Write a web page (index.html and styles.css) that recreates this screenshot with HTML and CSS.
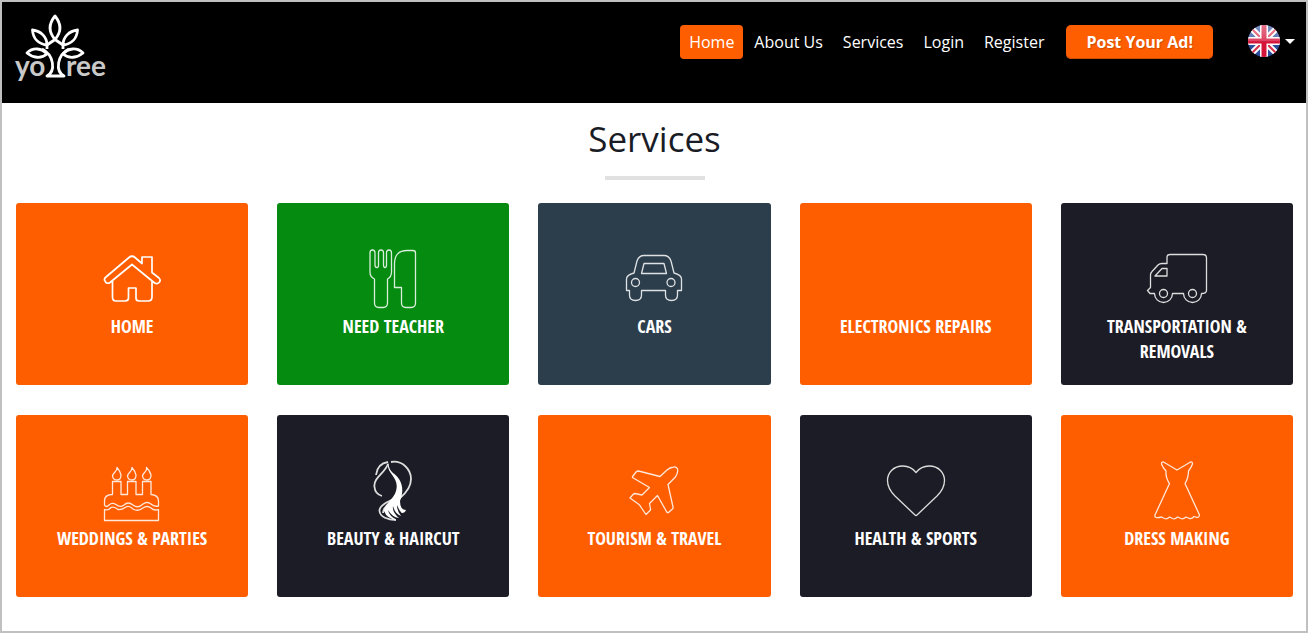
FILE: index.html
```html
<!DOCTYPE html>
<html lang="en">
<head>
<meta charset="utf-8">
<meta name="viewport" content="width=device-width, initial-scale=1">
<title>Yotree - Services</title>
<link rel="stylesheet" href="styles.css">
</head>
<body>
<header class="site-header">
  <a class="logo" href="#" aria-label="Yotree">
    <svg class="logo-art" viewBox="0 0 90 70" aria-hidden="true">
      <g class="logo-word">
        <text x="0" y="62">yo</text>
        <text x="51" y="62">ree</text>
      </g>
      <g class="logo-tree">
        <path d="M40 2C33.500 10 33.500 18 40 25.500C46.500 18 46.500 10 40 2Z"/>
        <path d="M17.500 16C18 24 23 30 32 31C32 23 26 17 17.500 16Z"/>
        <path d="M62.500 16C62 24 57 30 48 31C48 23 54 17 62.500 16Z"/>
        <path d="M12 39C18 33 27 34 32 40C26 45 18 44 12 39Z"/>
        <path d="M68 39C62 33 53 34 48 40C54 45 62 44 68 39Z"/>
        <path d="M32 35V31L40 25.500L48 31V35"/>
        <path d="M27 35C39 41 41 57 32 62H49C40 57 42 41 54 35"/>
      </g>
    </svg>
  </a>
  <nav class="main-nav" aria-label="Main">
    <a class="nav-link active" href="#">Home</a>
    <a class="nav-link" href="#">About Us</a>
    <a class="nav-link" href="#">Services</a>
    <a class="nav-link" href="#">Login</a>
    <a class="nav-link" href="#">Register</a>
  </nav>
  <button class="post-ad" type="button">Post Your Ad!</button>
  <button class="language" type="button" aria-label="Language: English">
    <svg class="flag" viewBox="0 0 32 32" aria-hidden="true">
      <defs>
        <clipPath id="disc"><circle cx="16" cy="16" r="16"/></clipPath>
        <linearGradient id="gloss" x1="0" y1="0" x2="0" y2="1">
          <stop offset="0" stop-color="#fff" stop-opacity=".4"/>
          <stop offset=".5" stop-color="#fff" stop-opacity=".2"/>
          <stop offset=".52" stop-color="#fff" stop-opacity="0"/>
        </linearGradient>
      </defs>
      <g clip-path="url(#disc)">
        <rect width="32" height="32" fill="#2a4d9b"/>
        <path d="M0 0L32 32M32 0L0 32" stroke="#fff" stroke-width="6"/>
        <path d="M0 0L32 32M32 0L0 32" stroke="#d8304a" stroke-width="2"/>
        <path d="M16 0V32M0 16H32" stroke="#fff" stroke-width="8"/>
        <path d="M16 0V32M0 16H32" stroke="#d5143a" stroke-width="5"/>
        <rect width="32" height="32" fill="url(#gloss)"/>
      </g>
    </svg>
    <svg class="caret" viewBox="0 0 10 5" aria-hidden="true"><path d="M0 0H10L5 5Z"/></svg>
  </button>
</header>

<main class="services">
  <h1 class="title">Services</h1>
  <div class="grid">
    <a class="card orange" href="#">
      <svg class="icon bold" viewBox="0 0 64 64" aria-hidden="true"><path d="M12.500 34V50Q12.500 54 16 54H25Q28.500 54 28.500 51V41H36V51Q36 54 39 54H48Q52 54 52 50V34M32 17.500L10 35.500Q8 37 6 35.500L5 34Q3.500 32 6 30L29 10.500Q32 8 35 10.500L42 16.500V10H52V25.500L59 31Q61 33 59.500 35Q57 38 54 35.500Z"/></svg>
      <span class="label">Home</span>
    </a>
    <a class="card green" href="#">
      <svg class="icon" viewBox="0 0 64 64" aria-hidden="true"><path d="M9 6Q9 3 11.500 3T14 6V18Q14 20.500 15.800 20.500T17.500 18V6Q17.500 3 20 3T22.500 6V18Q22.500 20.500 24 20.500T25.500 18V6Q25.500 3 28 3T30.500 6V25Q30.500 30 26.500 32V56Q26.500 60.500 22 60.500H18Q13.500 60.500 13.500 56V32Q9 30 9 25ZM33.500 40.500V17Q33.500 3.500 46 3.500H52Q54.500 3.500 54.500 6V56Q54.500 60.500 50 60.500H45Q40.500 60.500 40.500 56V40.500Z"/></svg>
      <span class="label">Need Teacher</span>
    </a>
    <a class="card slate" href="#">
      <svg class="icon" viewBox="0 0 64 64" aria-hidden="true"><path d="M12 26L15 14Q17 8.500 22 8.500H42Q47 8.500 49 14L52 26Q59.500 28 59.500 32V43.500H55.500V48Q55.500 53.500 49.500 53.500T43.500 48V43.500H19.500V48Q19.500 53.500 13.500 53.500T7.500 48V43.500H4.500V32Q4.500 28 12 26ZM22 16.500H42L44.500 26.500H19.500Z"/><circle cx="13.500" cy="35.500" r="4"/><circle cx="49" cy="35.500" r="4"/></svg>
      <span class="label">Cars</span>
    </a>
    <a class="card orange" href="#">
      <span class="icon"></span>
      <span class="label">Electronics Repairs</span>
    </a>
    <a class="card dark" href="#">
      <svg class="icon" viewBox="0 0 64 64" aria-hidden="true"><path d="M22 16V10Q22 7.500 25 7.500H58Q61.500 7.500 61.500 11V43.500Q61.500 46.500 56.500 46.500A9 9 0 0 1 38.500 46.500H27.500A9 9 0 0 1 9.500 46.500H5L2.500 43.500L5.500 40.500V28Q5.500 26 7 24.500L13 18Q14.500 16.500 17 16.500H22ZM10 29H22V21.500H17Z"/><circle cx="18.500" cy="46.500" r="4"/><circle cx="47.500" cy="46.500" r="4"/></svg>
      <span class="label">Transportation &amp; Removals</span>
    </a>
    <a class="card orange" href="#">
      <svg class="icon" viewBox="0 0 64 64" aria-hidden="true"><path d="M4.500 46V42Q4.500 35.500 12.500 35.500V22.500H21V35.500H27.500V22.500H36V35.500H42.500V22.500H51V35.500Q58.500 36 58.500 42V47Q54 48 51 45Q47 42 43 45Q38 50 33 46Q28 42 24 46Q20 49 16 45.500Q12 43 9 46T4.500 46ZM4.500 61.500V50.500Q8 52 11 48.500Q14 47 18 50.500Q22 51 26 48Q29 46 33 50Q38 53 43 49Q47 46 51 49Q54 52 58.500 50.500V61.500Z"/><path d="M17 8.500Q20 12 21 16Q21 21 17 21T12.500 17Q13 15 15 13Q17 11 17 8.500ZM32 8.500Q35 12 36 16Q36 21 32 21T27.500 17Q28 15 30 13Q32 11 32 8.500ZM46.500 8.500Q50 12 51 16Q51 21 47 21T42.500 17Q43 15 45 13Q47 11 46.500 8.500Z"/></svg>
      <span class="label">Weddings &amp; Parties</span>
    </a>
    <a class="card dark" href="#">
      <svg class="icon" viewBox="0 0 64 64" aria-hidden="true"><path class="thick" d="M27 5C24 14 12 19 13.500 28C14 33 17 36 21 37M15 16C16 8 20 4 27 3M30 3C41 1 50 10 50 20C50 28 45 34 39 39M37 38C28 42 18 46 18.500 52C19 58 27 61 35 61M35 41C28 45 22 48 22 54"/><path class="solid" d="M27 3C25 16 39 17 35 32C33 40 23 45 23 52Q26 60 36 61Q28 57 27 51Q31 58 38 59Q31 53 32 47Q34 55 40 57Q36 52 36 46Q39 53 41 54Q44 54 45 51Q39 51 39 42C45 27 38 18 32 14Q28 11 27 3Z"/></svg>
      <span class="label">Beauty &amp; Haircut</span>
    </a>
    <a class="card orange" href="#">
      <svg class="icon" viewBox="0 0 64 64" aria-hidden="true"><path d="M38 17.500L16.500 12L14.500 12.500L10.500 17.500V18.500L27.500 28.500L20 36L13 34.500Q12 34.500 11 35.500L8 39L17 45.500Q18.500 47 19.500 49L24 55.500L28.500 51V50L27.500 44.500L35.500 36.500L45 53.500H46.500L51 49.500V48L46 25.500L53 18.500Q56.500 14 55.500 10Q54.500 7.500 51.500 8Q48 8.500 45 11Z"/></svg>
      <span class="label">Tourism &amp; Travel</span>
    </a>
    <a class="card dark" href="#">
      <svg class="icon" viewBox="0 0 64 64" aria-hidden="true"><path d="M32 13.500C28 8.500 24 7 19 7C9 7 3.500 14 3.500 21.500C3.500 29 8 34 11 37L31 56Q32 57 33 56L53 37C56 34 60.500 29 60.500 21.500C60.500 14 55 7 45 7C40 7 36 8.500 32 13.500Z"/></svg>
      <span class="label">Health &amp; Sports</span>
    </a>
    <a class="card orange" href="#">
      <svg class="icon" viewBox="0 0 64 64" aria-hidden="true"><path d="M18.500 3L32 11L45.500 3Q47.500 2.500 47.500 5Q46 9 43.500 12Q43.500 19 40 24.500L54.500 56Q54 59.500 50.500 58L49 57.500Q47 60 44.500 59.500L41 58Q38 60.500 36 59.500L32.500 58Q30 60.500 27.500 59.500L24.500 58Q22 60.500 19.500 59.500L16.500 58Q9 60 10 56L24.500 24.500Q20.500 19 21 12Q18 9 16.500 5Q16.500 2.500 18.500 3Z"/></svg>
      <span class="label">Dress Making</span>
    </a>
  </div>
</main>
</body>
</html>
```

FILE: styles.css
```css
* {
  box-sizing: border-box;
}

body {
  margin: 0;
  min-height: 100vh;
  border: 2px solid #c0c0c0;
  background: #fff;
  color: #1a1c25;
  font-family: "Open Sans", sans-serif;
  font-size: 16px;
}

a {
  color: inherit;
  text-decoration: none;
}

button {
  border: 0;
  font: inherit;
  color: inherit;
  cursor: pointer;
}

.site-header {
  display: flex;
  align-items: flex-start;
  padding: 12px 11px 19px 13px;
  background: #000;
  color: #fff;
}

.logo {
  display: block;
  margin-right: auto;
}

.logo-art {
  display: block;
  width: 90px;
  height: 70px;
  overflow: visible;
}

.logo-word {
  fill: #c9c9c9;
  font-family: Lato, sans-serif;
  font-size: 28px;
  font-weight: 700;
}

.logo-tree {
  fill: none;
  stroke: #fff;
  stroke-width: 2.8;
  stroke-linejoin: round;
}

.main-nav {
  display: flex;
  gap: 2px;
  margin-top: 11px;
}

.nav-link {
  padding: 0 9px;
  border-radius: 4px;
  line-height: 34px;
}

.nav-link.active {
  background: #ff5e00;
}

.post-ad {
  height: 34px;
  margin: 11px 0 0 13px;
  padding: 0 20px;
  border-radius: 5px;
  background: #ff5e00;
  box-shadow: inset 0 -1px 0 #c94c00;
  font-weight: 700;
  line-height: 34px;
  text-shadow: 1px 1px 1px rgba(0, 0, 0, 0.2);
}

.language {
  display: flex;
  align-items: center;
  gap: 5px;
  margin: 11px 0 0 35px;
  padding: 0;
  background: none;
}

.flag {
  width: 32px;
  height: 32px;
}

.caret {
  width: 10px;
  height: 5px;
  fill: #fff;
}

.services {
  padding: 0 13px 34px 14px;
}

.title {
  display: flex;
  flex-direction: column;
  align-items: center;
  gap: 13px;
  margin: 0 0 23px;
  padding-top: 11px;
  font-size: 35px;
  font-weight: 400;
  line-height: 49px;
}

.title::after {
  content: "";
  width: 100px;
  height: 4px;
  background: #e1e1e1;
}

.grid {
  display: grid;
  grid-template-columns: repeat(5, 1fr);
  gap: 30px 29px;
}

.card {
  display: flex;
  flex-direction: column;
  align-items: center;
  gap: 3px;
  min-height: 182px;
  padding: 44px 20px 20px;
  border-radius: 3px;
  color: #fff;
}

.orange {
  background: #ff5e00;
}

.green {
  background: #048b10;
}

.slate {
  background: #2c3e4c;
}

.dark {
  background: #1c1c26;
}

.icon {
  flex: none;
  width: 64px;
  height: 64px;
  fill: none;
  stroke: #fff;
  stroke-opacity: 0.85;
  stroke-width: 1.3;
  stroke-linejoin: round;
}

.icon.bold {
  stroke-opacity: 1;
  stroke-width: 1.7;
}

.thick {
  stroke-width: 1.8;
}

.solid {
  fill: #fff;
  stroke: none;
}

.label {
  font-family: "Open Sans Condensed", "Liberation Sans Narrow", "Liberation Sans", sans-serif;
  font-size: 18px;
  font-weight: 700;
  line-height: 25px;
  text-align: center;
  text-transform: uppercase;
}
```
